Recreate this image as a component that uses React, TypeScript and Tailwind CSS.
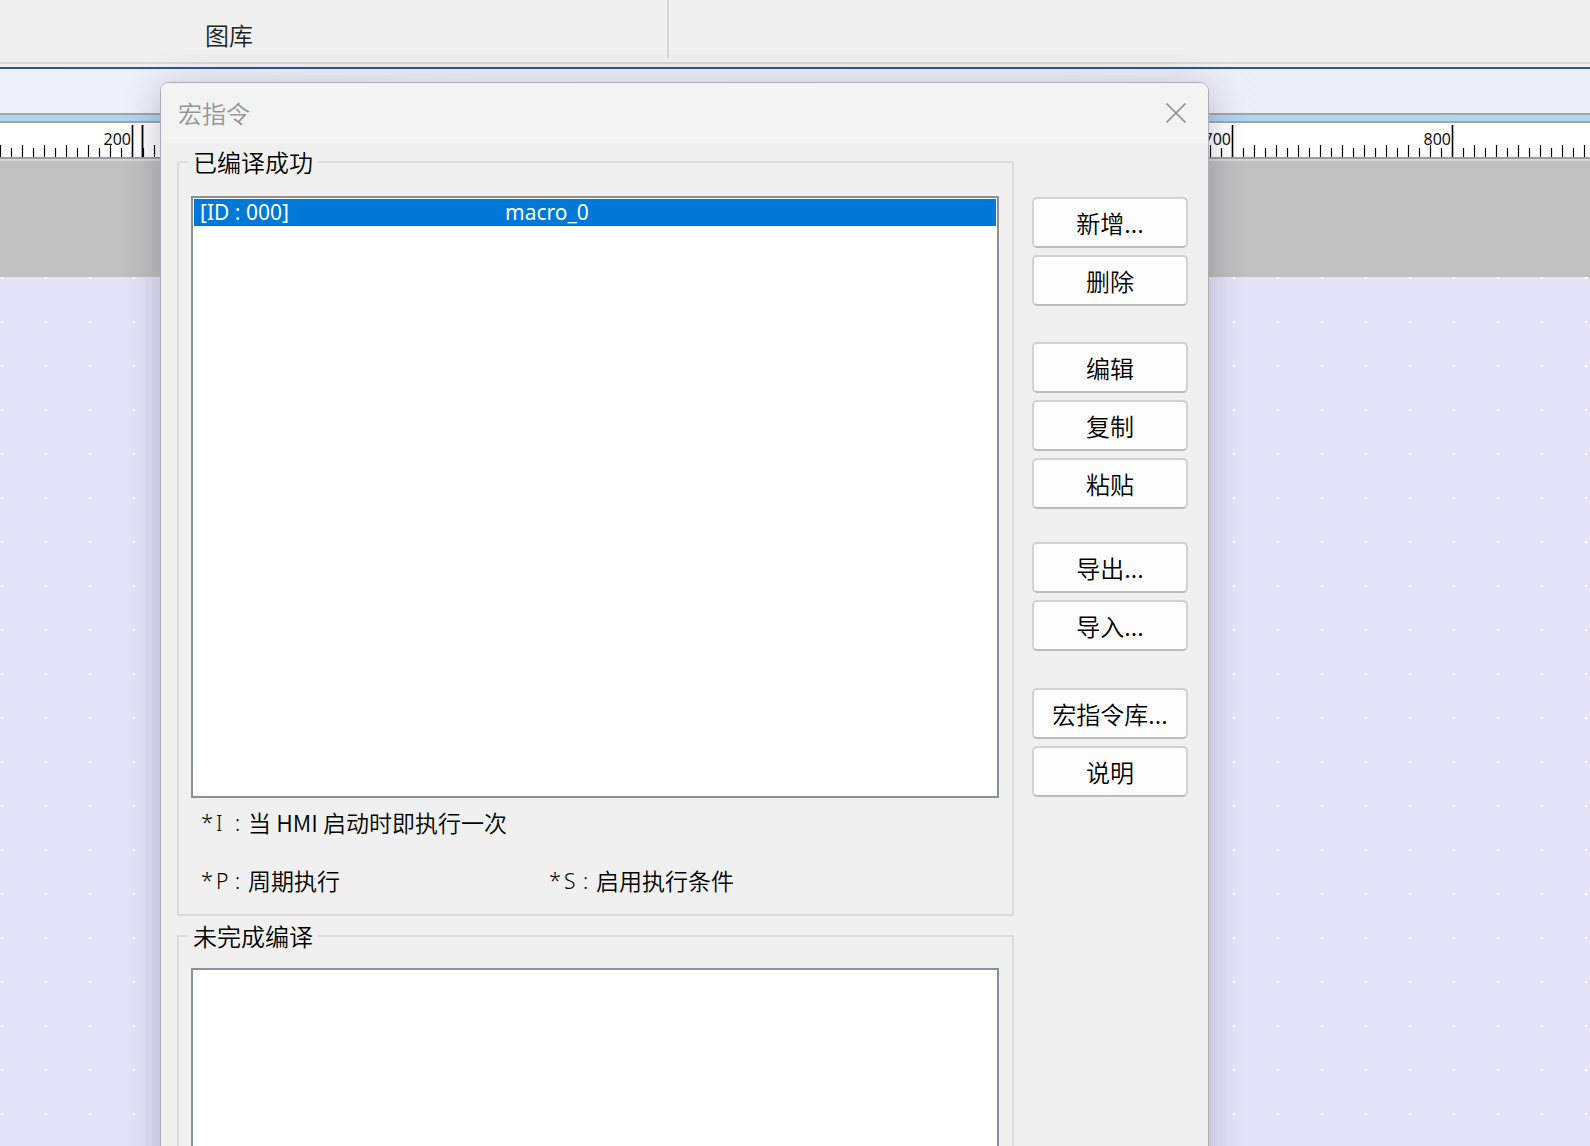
import React from "react";

const cjk = "font-['Noto_Sans_CJK_SC','Noto_Sans',sans-serif]";

const ticks = Array.from({ length: 145 }, (_, k) => k);

function Ruler() {
  return (
    <svg width="1590" height="34" className="block">
      {ticks.map((k) => {
        const off = (((k - 12) % 20) + 20) % 20;
        const x = k * 11 + 0.5;
        const y1 = off === 0 ? 2 : off % 2 === 1 ? 25 : 22;
        return (
          <line
            key={k}
            x1={x}
            x2={x}
            y1={y1}
            y2={34}
            stroke="#000"
            strokeWidth={off === 0 ? 1.6 : 1.2}
          />
        );
      })}
      {/* position marker */}
      <line x1={142.5} x2={142.5} y1={2} y2={34} stroke="#000" strokeWidth={1.8} />
      {ticks
        .filter((k) => k >= 12 && (k - 12) % 20 === 0)
        .map((k) => (
          <text
            key={k}
            x={k * 11 - 1}
            y={22}
            textAnchor="end"
            fontSize="16"
            fontFamily="'Noto Sans', sans-serif"
            fill="#111"
          >
            {200 + ((k - 12) / 20) * 100}
          </text>
        ))}
    </svg>
  );
}

function Btn({ label, className = "" }: { label: string; className?: string }) {
  return (
    <button
      className={`h-[51px] w-[156px] rounded-[5px] border-2 border-[#d2d2d2] border-b-[#bcbcbc] bg-[#fdfdfd] text-[24px] font-[350] leading-none text-black flex items-center justify-center ${className}`}
    >
      {label}
    </button>
  );
}

function Group({
  label,
  className = "",
  children,
}: {
  label: string;
  className?: string;
  children: React.ReactNode;
}) {
  return (
    <div className={`relative border-2 border-[#dcdcdc] ${className}`}>
      <span className="absolute left-[9px] -top-[17px] px-[5px] bg-[#f0f0f0] text-[24px] font-[350] leading-[32px] text-black">
        {label}
      </span>
      {children}
    </div>
  );
}

function Prefix({ letter }: { letter: string }) {
  return (
    <span className="inline-flex w-[47px] font-['Noto_Sans',sans-serif] text-[21px]">
      <span className="w-[15px] text-[22px] relative -top-[2px]">*</span>
      <span className="w-[19px]">{letter}</span>
      <span>:</span>
    </span>
  );
}

export default function App() {
  return (
    <div className={`relative w-[1590px] h-[1146px] overflow-hidden flex flex-col bg-[#f0f0f0] ${cjk}`}>
      {/* top toolbar */}
      <div className="h-[62px] flex bg-[#f0f0f0]">
        <div className="w-[669px] h-[58px] border-r-2 border-[#d6d6d6] pl-[205px] pt-[19px]">
          <span className="text-[24px] font-[350] leading-[32px] text-[#222]">图库</span>
        </div>
      </div>
      <div className="h-[2px] bg-[#d9d9d9]" />
      <div className="h-[3px] bg-[#f0f0f0]" />
      <div className="h-[2px] bg-[#2b5695]" />
      <div className="h-[44px] bg-gradient-to-r from-[#eef0fa] to-[#eceef8]" />
      <div className="h-[2px] bg-[#a5a5a8]" />
      <div className="h-[6px] bg-[#b0d5f1]" />
      <div className="h-[2px] bg-[#a5a5a8]" />
      <div className="h-[34px] bg-white">
        <Ruler />
      </div>
      <div className="h-[2px] bg-[#9d9d9d]" />
      <div className="h-[2px] bg-[#d8d8d8]" />
      <div className="h-[116px] bg-[#c0c0c0]" />
      <div className="flex-1 bg-[#e4e4f8] bg-[radial-gradient(circle,#ffffff_1.3px,transparent_1.6px)] bg-[length:44px_44px] bg-[position:-20px_-21px]" />

      {/* dialog */}
      <div className="absolute left-[160px] top-[82px] w-[1049px] h-[1100px] rounded-t-[9px] border border-[#acacb2] bg-[#f0f0f0] shadow-[0_6px_36px_rgba(40,40,70,0.28)] overflow-hidden flex flex-col">
        <div className="h-[60px] shrink-0 bg-[#f3f3f3] flex items-center justify-between pl-[17px] pr-[21px]">
          <span className="text-[24px] font-[350] leading-[32px] text-[#959595]">宏指令</span>
          <svg width="22" height="22" viewBox="0 0 22 22">
            <path d="M1.5 1.5 L20.5 20.5 M20.5 1.5 L1.5 20.5" stroke="#8a8a8a" strokeWidth="1.6" />
          </svg>
        </div>

        <div className="flex pl-[16px] pt-[18px]">
          <div className="w-[837px] flex flex-col">
            <Group label="已编译成功" className="h-[755px] pt-[33px] pl-[12px]">
              <div className="w-[808px] h-[602px] border-2 border-[#8b9099] bg-white pt-[1px] px-[1px]">
                <div className="h-[27px] bg-[#0078d7] text-white flex items-center font-['Noto_Sans',sans-serif] text-[21px] leading-none">
                  <span className="pl-[6px] w-[311px]">[ID : 000]</span>
                  <span>macro_0</span>
                </div>
              </div>
              <div className="pl-[10px] mt-[8px] text-[23px] font-[350] leading-[32px] text-black">
                <div>
                  <Prefix letter="I" />当 HMI 启动时即执行一次
                </div>
                <div className="flex mt-[25px]">
                  <div className="w-[348px]">
                    <Prefix letter="P" />周期执行
                  </div>
                  <div>
                    <Prefix letter="S" />启用执行条件
                  </div>
                </div>
              </div>
            </Group>
            <Group label="未完成编译" className="mt-[19px] h-[400px] pt-[31px] pl-[12px]">
              <div className="w-[808px] h-[300px] border-2 border-[#8b9099] bg-white" />
            </Group>
          </div>

          <div className="ml-[18px] mt-[36px] flex flex-col">
            <Btn label="新增..." />
            <Btn label="删除" className="mt-[7px]" />
            <Btn label="编辑" className="mt-[36px]" />
            <Btn label="复制" className="mt-[7px]" />
            <Btn label="粘贴" className="mt-[7px]" />
            <Btn label="导出..." className="mt-[33px]" />
            <Btn label="导入..." className="mt-[7px]" />
            <Btn label="宏指令库..." className="mt-[37px]" />
            <Btn label="说明" className="mt-[7px]" />
          </div>
        </div>
      </div>
    </div>
  );
}
